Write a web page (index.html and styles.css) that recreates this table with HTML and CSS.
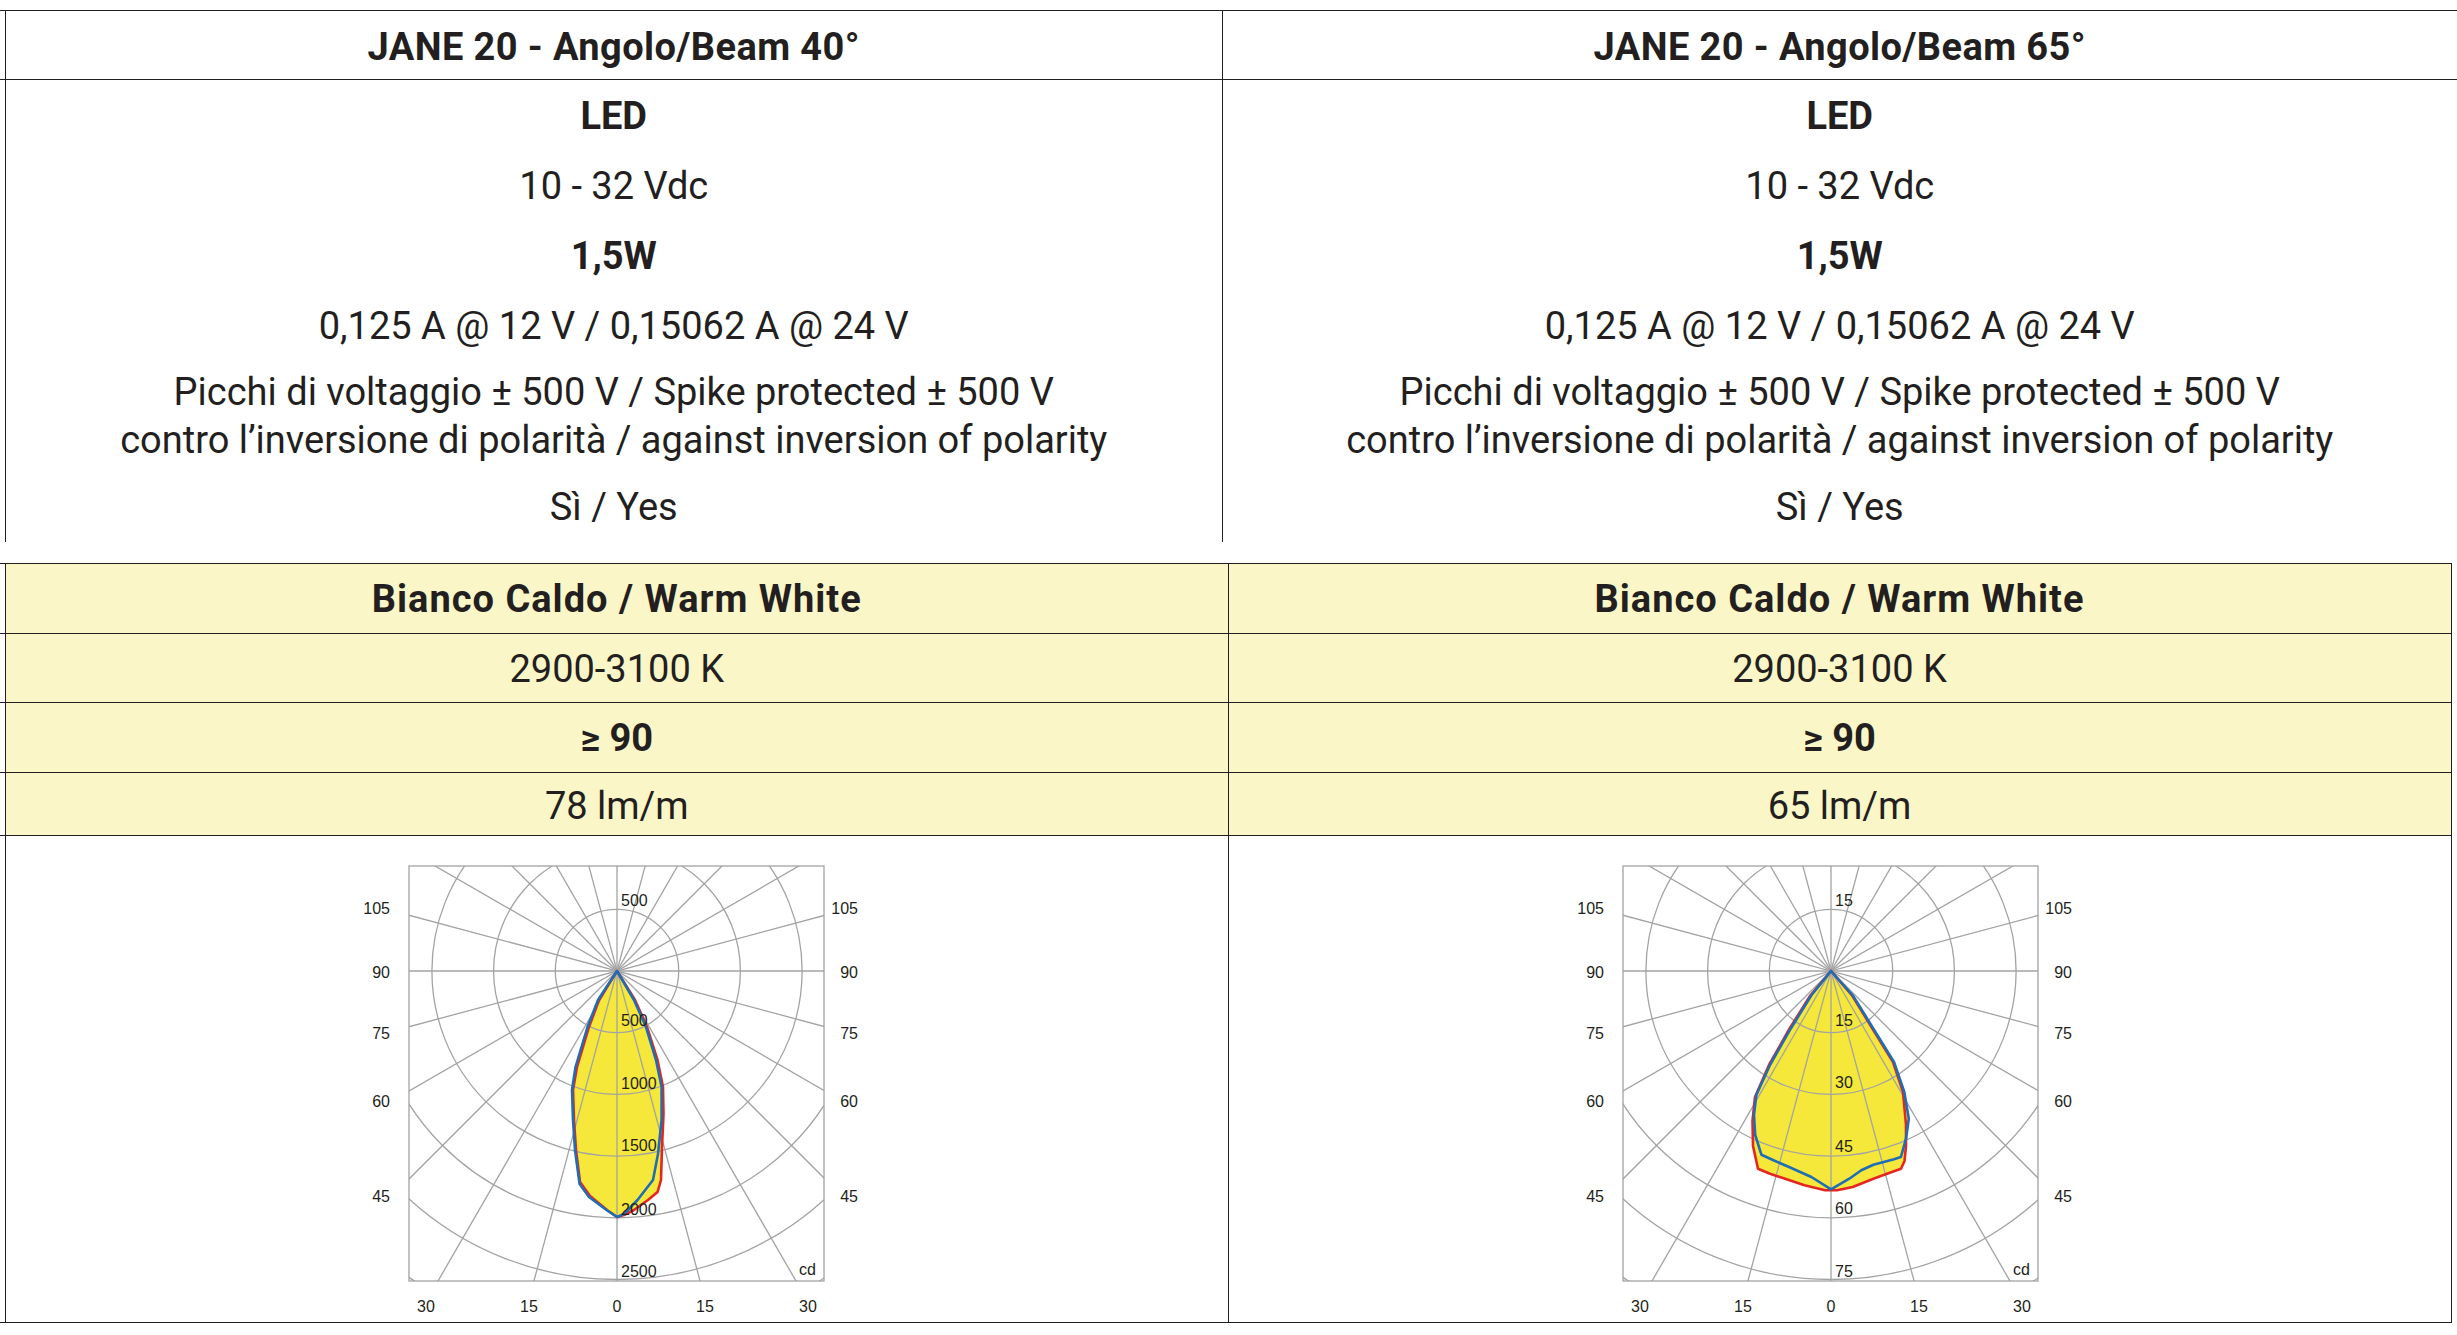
FILE: index.html
```html
<!DOCTYPE html>
<html lang="it">
<head>
<meta charset="utf-8">
<title>JANE 20</title>
<link rel="stylesheet" href="styles.css">
</head>
<body>
<div class="page">
  <section class="spec">
    <div class="stub stub-head"></div>
    <div class="head">JANE 20 - Angolo/Beam 40°</div>
    <div class="head">JANE 20 - Angolo/Beam 65°</div>
    <div class="stub"></div>
    <div class="col">
      <div class="row bold">LED</div>
      <div class="row">10 - 32 Vdc</div>
      <div class="row bold">1,5W</div>
      <div class="row">0,125 A @ 12 V / 0,15062 A @ 24 V</div>
      <div class="row two">Picchi di voltaggio ± 500 V / Spike protected ± 500 V<br>contro l’inversione di polarità / against inversion of polarity</div>
      <div class="row last">Sì / Yes</div>
    </div>
    <div class="col">
      <div class="row bold">LED</div>
      <div class="row">10 - 32 Vdc</div>
      <div class="row bold">1,5W</div>
      <div class="row">0,125 A @ 12 V / 0,15062 A @ 24 V</div>
      <div class="row two">Picchi di voltaggio ± 500 V / Spike protected ± 500 V<br>contro l’inversione di polarità / against inversion of polarity</div>
      <div class="row last">Sì / Yes</div>
    </div>
  </section>

  <section class="lum">
    <div class="stub2"></div>
    <div class="lc lc-head bold">Bianco Caldo / Warm White</div>
    <div class="lc lc-r lc-head bold">Bianco Caldo / Warm White</div>

    <div class="stub2"></div>
    <div class="lc">2900-3100 K</div>
    <div class="lc lc-r">2900-3100 K</div>

    <div class="stub2"></div>
    <div class="lc bold">≥ 90</div>
    <div class="lc lc-r bold">≥ 90</div>

    <div class="stub2"></div>
    <div class="lc lc-last">78 lm/m</div>
    <div class="lc lc-r lc-last">65 lm/m</div>

    <div class="stub2"></div>
    <div class="chart">
      <svg class="polar" width="536" height="464" viewBox="0 0 536 464">
        <defs>
          <clipPath id="cp1"><rect x="60" y="11" width="415" height="415"/></clipPath>
        </defs>
        <g clip-path="url(#cp1)">
          <path class="fill" d="M268,116 L250,145 L240,172 L228,212 L224,235 L225,265 L227,295 L231,327 L241,341 L258,355 L268,362 L275,360 L285,355 L299,345 L308.6,337 L312,325 L313,292 L314.5,259 L314,232 L308.5,205 L298,172 L286,145 Z"/>
          <path class="fill" d="M268,116 L249,145 L238.5,172 L226.5,212 L223,235 L224,265 L226,295 L230.6,329 L240,342 L257.5,355 L268,362 L275,359 L288.5,345 L304,325 L309,299 L312.6,265 L312.6,232 L307,205 L297,172 L285,145 Z"/>
          <g class="grid" transform="translate(268 116)">
            <circle r="61.7"/><circle r="123.4"/><circle r="185.1"/><circle r="246.8"/><circle r="308.5"/><circle r="370.2"/>
            <line x1="0" y1="-700" x2="0" y2="700"/>
            <line x1="0" y1="-700" x2="0" y2="700" transform="rotate(15)"/>
            <line x1="0" y1="-700" x2="0" y2="700" transform="rotate(30)"/>
            <line x1="0" y1="-700" x2="0" y2="700" transform="rotate(45)"/>
            <line x1="0" y1="-700" x2="0" y2="700" transform="rotate(60)"/>
            <line x1="0" y1="-700" x2="0" y2="700" transform="rotate(75)"/>
            <line x1="0" y1="-700" x2="0" y2="700" transform="rotate(90)"/>
            <line x1="0" y1="-700" x2="0" y2="700" transform="rotate(105)"/>
            <line x1="0" y1="-700" x2="0" y2="700" transform="rotate(120)"/>
            <line x1="0" y1="-700" x2="0" y2="700" transform="rotate(135)"/>
            <line x1="0" y1="-700" x2="0" y2="700" transform="rotate(150)"/>
            <line x1="0" y1="-700" x2="0" y2="700" transform="rotate(165)"/>
          </g>
          <path class="red" d="M268,116 L250,145 L240,172 L228,212 L224,235 L225,265 L227,295 L231,327 L241,341 L258,355 L268,362 L275,360 L285,355 L299,345 L308.6,337 L312,325 L313,292 L314.5,259 L314,232 L308.5,205 L298,172 L286,145 Z"/>
          <path class="blue" d="M268,116 L249,145 L238.5,172 L226.5,212 L223,235 L224,265 L226,295 L230.6,329 L240,342 L257.5,355 L268,362 L275,359 L288.5,345 L304,325 L309,299 L312.6,265 L312.6,232 L307,205 L297,172 L285,145 Z"/>
        </g>
        <rect class="frame" x="60" y="11" width="415" height="415"/>
        <g class="ax">
          <text class="end" x="41" y="59">105</text>
          <text class="end" x="41" y="123">90</text>
          <text class="end" x="41" y="184">75</text>
          <text class="end" x="41" y="252">60</text>
          <text class="end" x="41" y="347">45</text>
          <text class="end" x="509" y="59">105</text>
          <text class="end" x="509" y="123">90</text>
          <text class="end" x="509" y="184">75</text>
          <text class="end" x="509" y="252">60</text>
          <text class="end" x="509" y="347">45</text>
          <text class="mid" x="77" y="457">30</text>
          <text class="mid" x="180" y="457">15</text>
          <text class="mid" x="268" y="457">0</text>
          <text class="mid" x="356" y="457">15</text>
          <text class="mid" x="459" y="457">30</text>
          <text x="272" y="51">500</text>
          <text x="272" y="171">500</text>
          <text x="272" y="234">1000</text>
          <text x="272" y="296">1500</text>
          <text x="272" y="360">2000</text>
          <text x="272" y="422">2500</text>
          <text class="end" x="467" y="420">cd</text>
        </g>
      </svg>
    </div>
    <div class="chart chart-r">
      <svg class="polar" width="536" height="464" viewBox="0 0 536 464">
        <defs>
          <clipPath id="cp2"><rect x="60" y="11" width="415" height="415"/></clipPath>
        </defs>
        <g clip-path="url(#cp2)">
          <path class="fill" d="M268,116 L247.5,140.3 L226.5,173.7 L206,210 L192,242 L189.5,266 L190,291 L195,313.7 L207,318.7 L241.5,330.3 L262,335.3 L268,335.3 L274,335.3 L289.7,332 L310.4,323.7 L324,318.7 L338,313.7 L341.5,306 L343,291 L343,270 L340,237 L330,207 L309.5,173.7 L289,140.3 Z"/>
          <path class="fill" d="M268,116 L248.4,140.3 L227.7,173.7 L207,210 L193.3,240 L191,260 L192.2,280 L198.4,299.7 L210.5,305.3 L227.7,312.7 L248.4,322 L268,334.3 L286.3,323.7 L298.3,315.3 L310.4,309.7 L331,304.3 L337.9,302 L343,283.7 L345.8,263.7 L341.3,237 L331,207 L310.4,173.7 L289.7,140.3 Z"/>
          <g class="grid" transform="translate(268 116)">
            <circle r="61.7"/><circle r="123.4"/><circle r="185.1"/><circle r="246.8"/><circle r="308.5"/><circle r="370.2"/>
            <line x1="0" y1="-700" x2="0" y2="700"/>
            <line x1="0" y1="-700" x2="0" y2="700" transform="rotate(15)"/>
            <line x1="0" y1="-700" x2="0" y2="700" transform="rotate(30)"/>
            <line x1="0" y1="-700" x2="0" y2="700" transform="rotate(45)"/>
            <line x1="0" y1="-700" x2="0" y2="700" transform="rotate(60)"/>
            <line x1="0" y1="-700" x2="0" y2="700" transform="rotate(75)"/>
            <line x1="0" y1="-700" x2="0" y2="700" transform="rotate(90)"/>
            <line x1="0" y1="-700" x2="0" y2="700" transform="rotate(105)"/>
            <line x1="0" y1="-700" x2="0" y2="700" transform="rotate(120)"/>
            <line x1="0" y1="-700" x2="0" y2="700" transform="rotate(135)"/>
            <line x1="0" y1="-700" x2="0" y2="700" transform="rotate(150)"/>
            <line x1="0" y1="-700" x2="0" y2="700" transform="rotate(165)"/>
          </g>
          <path class="red" d="M268,116 L247.5,140.3 L226.5,173.7 L206,210 L192,242 L189.5,266 L190,291 L195,313.7 L207,318.7 L241.5,330.3 L262,335.3 L268,335.3 L274,335.3 L289.7,332 L310.4,323.7 L324,318.7 L338,313.7 L341.5,306 L343,291 L343,270 L340,237 L330,207 L309.5,173.7 L289,140.3 Z"/>
          <path class="blue" d="M268,116 L248.4,140.3 L227.7,173.7 L207,210 L193.3,240 L191,260 L192.2,280 L198.4,299.7 L210.5,305.3 L227.7,312.7 L248.4,322 L268,334.3 L286.3,323.7 L298.3,315.3 L310.4,309.7 L331,304.3 L337.9,302 L343,283.7 L345.8,263.7 L341.3,237 L331,207 L310.4,173.7 L289.7,140.3 Z"/>
        </g>
        <rect class="frame" x="60" y="11" width="415" height="415"/>
        <g class="ax">
          <text class="end" x="41" y="59">105</text>
          <text class="end" x="41" y="123">90</text>
          <text class="end" x="41" y="184">75</text>
          <text class="end" x="41" y="252">60</text>
          <text class="end" x="41" y="347">45</text>
          <text class="end" x="509" y="59">105</text>
          <text class="end" x="509" y="123">90</text>
          <text class="end" x="509" y="184">75</text>
          <text class="end" x="509" y="252">60</text>
          <text class="end" x="509" y="347">45</text>
          <text class="mid" x="77" y="457">30</text>
          <text class="mid" x="180" y="457">15</text>
          <text class="mid" x="268" y="457">0</text>
          <text class="mid" x="356" y="457">15</text>
          <text class="mid" x="459" y="457">30</text>
          <text x="272" y="51">15</text>
          <text x="272" y="171">15</text>
          <text x="272" y="233">30</text>
          <text x="272" y="297">45</text>
          <text x="272" y="359">60</text>
          <text x="272" y="422">75</text>
          <text class="end" x="467" y="420">cd</text>
        </g>
      </svg>
    </div>
  </section>
</div>
</body>
</html>
```

FILE: styles.css
```css
* {
  box-sizing: border-box;
  margin: 0;
  padding: 0;
}

html, body {
  background: #ffffff;
}

body {
  margin: 0;
  color: #231f20;
  font-family: Roboto, "Liberation Sans", Arial, sans-serif;
  font-size: 38px;
  line-height: 48px;
  overflow: hidden;
}

.page {
  padding-top: 9.5px;
}

.bold {
  font-weight: 700;
}

/* ---------- electrical table ---------- */
.spec {
  display: grid;
  grid-template-columns: 5px 1216.5px 1fr;
  border-top: 1.5px solid #231f20;
  text-align: center;
}

.stub-head {
  border-bottom: 1.5px solid #231f20;
}

.head {
  font-weight: 700;
  letter-spacing: 0.4px;
  padding: 12px 0 8.5px;
  border-left: 1.5px solid #231f20;
  border-bottom: 1.5px solid #231f20;
}

.col {
  border-left: 1.5px solid #231f20;
}

.row {
  padding: 12px 0 10px;
}

.row.two {
  padding: 8px 0 7px;
}

.row.last {
  padding: 12px 0 11px;
}

/* ---------- luminous table ---------- */
.lum {
  display: grid;
  grid-template-columns: 5px 1222.5px 1224px;
  width: 2451.5px;
  margin-top: 21px;
  border-top: 1.5px solid #231f20;
  text-align: center;
}

.stub2 {
  border-bottom: 1.5px solid #231f20;
}

.lc {
  background: #faf6c7;
  padding: 11px 0 9.5px;
  border-left: 1.5px solid #231f20;
  border-bottom: 1.5px solid #231f20;
}

.lc-head {
  letter-spacing: 1px;
}

.lc-r {
  border-right: 1.5px solid #231f20;
}

.lc.lc-last {
  padding: 9px 0 5.5px;
}

.chart {
  display: flex;
  justify-content: center;
  padding: 19px 0 3.25px;
  border-left: 1.5px solid #231f20;
  border-bottom: 1.5px solid #231f20;
}

.chart-r {
  border-right: 1.5px solid #231f20;
  padding-right: 17px;
}

.polar {
  display: block;
}

/* ---------- polar diagram ---------- */
.polar .fill {
  fill: #f5e83a;
  stroke: none;
}

.polar .grid circle,
.polar .grid line {
  fill: none;
  stroke: #a3a3a3;
  stroke-width: 1.3;
}

.polar .frame {
  fill: none;
  stroke: #a3a3a3;
  stroke-width: 1.3;
}

.polar .red {
  fill: none;
  stroke: #e52521;
  stroke-width: 2.6;
  stroke-linejoin: round;
}

.polar .blue {
  fill: none;
  stroke: #1f6db5;
  stroke-width: 2.6;
  stroke-linejoin: round;
}

.polar .ax text {
  font-family: "Liberation Sans", Arial, sans-serif;
  font-size: 16px;
  fill: #231f20;
}

.polar .ax .end {
  text-anchor: end;
}

.polar .ax .mid {
  text-anchor: middle;
}
```
